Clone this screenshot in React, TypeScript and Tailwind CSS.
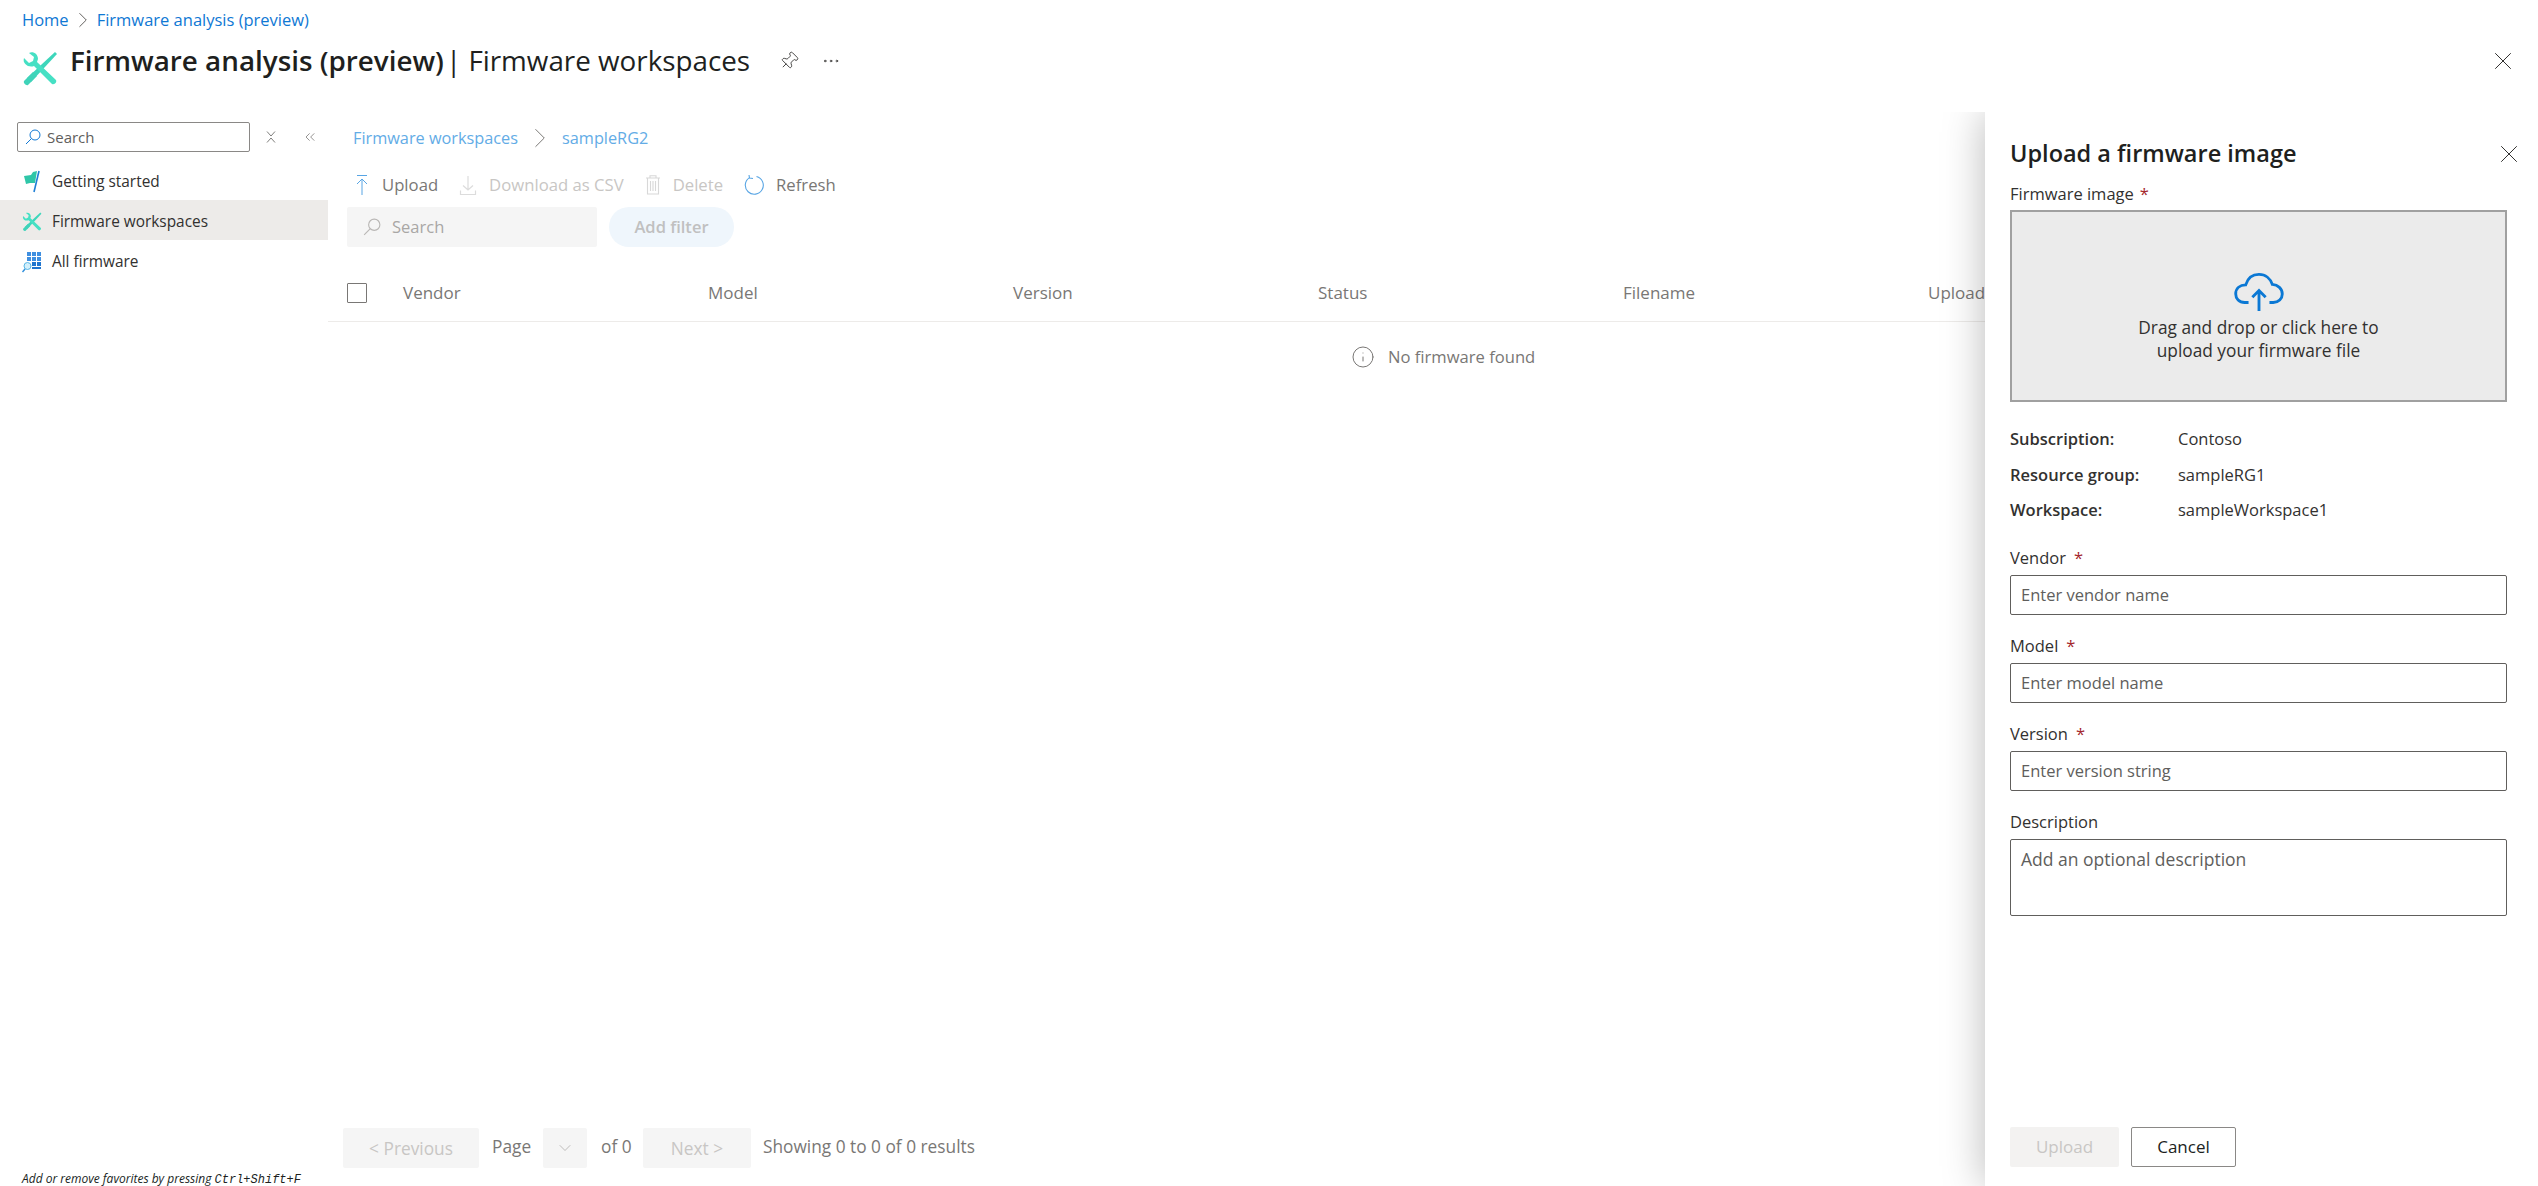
import type { ReactNode } from "react";
import { ChevronDown, ChevronRight, ChevronsLeft, Info, MoreHorizontal, Pin, X } from "lucide-react";

const FONT = "font-['Open_Sans','Noto_Sans',sans-serif]";

function WrenchIcon({ size }: { size: number }) {
  return (
    <svg width={size} height={size} viewBox="0 0 36 36" fill="none">
      <path d="M33 1 35 3 9 31 5 27Z" fill="#3dd6bb" />
      <path
        d="M2 7 7 12 11 10 12 6 7 2C11 0 16 3 16 8L15 11 34 29C35 31 33 34 30 33L12 15C7 17 0 13 2 7Z"
        fill="#46e0c4"
      />
      <path d="M2 30 11 21 15 25 6 34C4 35 1 32 2 30Z" fill="#3fd3b9" />
    </svg>
  );
}

function FlagIcon() {
  return (
    <svg width="20" height="24" viewBox="0 0 20 24" fill="none">
      <path d="M2 6 9 5 11 2 15 1 13 13 8 13 4 14Z" fill="#2fc6a8" />
      <path d="M17 1 12 22" stroke="#1f7fd6" strokeWidth="1.6" />
    </svg>
  );
}

function GridIcon() {
  return (
    <svg width="20" height="22" viewBox="0 0 20 22" fill="none">
      <path d="M5 1h4v4H5zM10 1h4v4h-4zM15 1h4v4h-4zM5 6h4v4H5zM10 6h4v4h-4zM15 6h4v4h-4z" fill="#3f8fe0" />
      <path d="M10 11h4v4h-4zM15 11h4v4h-4zM10 16h9v2H10z" fill="#1f75cf" />
      <circle cx="5.500" cy="15" r="3.500" fill="#d3f0fb" stroke="#58b6e6" />
      <path d="M3 18 0.500 21" stroke="#2f8fdc" strokeWidth="1.400" />
    </svg>
  );
}

function SearchGlyph({ size, className }: { size: number; className: string }) {
  return (
    <svg width={size} height={size} viewBox="0 0 16 16" fill="none" stroke="currentColor" className={className}>
      <circle cx="10" cy="6" r="5" />
      <path d="M6.500 9.500 1 15" />
    </svg>
  );
}

function CollapseGlyph() {
  return (
    <svg width="10" height="12" viewBox="0 0 10 12" fill="none" stroke="#605e5c" strokeWidth="0.8">
      <path d="M1 0.500 5 5 9 0.500M1 11.500 5 7 9 11.500" />
    </svg>
  );
}

function UploadArrow() {
  return (
    <svg width="16" height="20" viewBox="0 0 16 20" fill="none" className="text-[#58a5e4]">
      <path d="M3 0.500h10M8 20V4M3 9 8 4l5 5" stroke="currentColor" strokeWidth="1" />
    </svg>
  );
}

function DownloadArrow() {
  return (
    <svg width="18" height="20" viewBox="0 0 18 20" fill="none" className="text-[#dcdcdc]">
      <path d="M9 1v14M4 10.500 9 15l5-4.500M1.500 15.500v4h15v-4" stroke="currentColor" strokeWidth="1.200" />
    </svg>
  );
}

function TrashIcon() {
  return (
    <svg width="16" height="20" viewBox="0 0 16 20" fill="none" className="text-[#d8d8d8]">
      <path d="M1 3h14M5 3V0.800h6V3M2.500 3v16h11V3M5.500 6v10M8 6v10M10.500 6v10" stroke="currentColor" strokeWidth="1.100" />
    </svg>
  );
}

function RefreshGlyph() {
  return (
    <svg width="20" height="20" viewBox="0 0 20 20" fill="none" stroke="#58a5e4" strokeWidth="1.100">
      <path d="M12.500 1.500A9 9 0 1 1 5.500 2.600" />
      <path d="M5 0 5.500 3 9 3.500" />
    </svg>
  );
}

function CloudUpload() {
  return (
    <svg width="50" height="38" viewBox="0 0 52 40" fill="none" stroke="#0b78d4" strokeWidth="3">
      <path d="M15 31H11C5 31 1.500 27 1.500 22C1.500 16 6 12.500 12 12.500C14 6 19 1.500 26 1.500C33 1.500 38 6 40 12C46 12.500 50.500 16.500 50.500 22C50.500 27 46.500 31 41 31H37" />
      <path d="M26 40V19M19 25.500 26 18.500 33 25.500" />
    </svg>
  );
}

function ToolbarItem({ icon, label, muted }: { icon: ReactNode; label: string; muted?: boolean }) {
  return (
    <div className="flex items-center gap-[12px]">
      {icon}
      <span className={muted ? "text-[#c8c6c4]" : "text-[#797775]"}>{label}</span>
    </div>
  );
}

function Field({ label, placeholder }: { label: string; placeholder: string }) {
  return (
    <div className="flex flex-col">
      <div className="h-[24px] mb-[4px] flex items-center text-[#323130] font-medium">
        {label}
        <span className="ml-[8px] text-[#a4262c]">*</span>
      </div>
      <div className="h-[40px] flex items-center px-[10px] pt-[2px] border border-[#605e5c] rounded-[2px] text-[#605e5c]">
        {placeholder}
      </div>
    </div>
  );
}

function InfoRow({ label, value }: { label: string; value: string }) {
  return (
    <div className="flex items-center h-[35.500px]">
      <span className="w-[168px] font-semibold text-[#323130]">{label}</span>
      <span className="text-[#323130]">{value}</span>
    </div>
  );
}

export default function App() {
  const columns = ["Vendor", "Model", "Version", "Status", "Filename", "Upload"];

  return (
    <div className={`${FONT} relative flex flex-col w-full h-screen overflow-hidden bg-white text-[16.500px] text-[#323130]`}>
      {/* page header */}
      <div className="h-[112px] shrink-0 pl-[22px] pr-[20px] pt-[9px]">
        <div className="flex items-center h-[22px] text-[#0f78d4]">
          <span>Home</span>
          <ChevronRight size={26} strokeWidth={0.9} className="mx-[1px] text-[#605e5c]" />
          <span>Firmware analysis (preview)</span>
        </div>
        <div className="flex items-center mt-[8px] h-[44px]">
          <div className="mt-[15px] mr-[12px]">
            <WrenchIcon size={36} />
          </div>
          <span className="text-[27.800px] font-semibold text-[#201f1e]">Firmware analysis (preview)</span>
          <span className="text-[27.800px] text-[#201f1e] ml-[2px]">| Firmware workspaces</span>
          <Pin size={20} strokeWidth={1} className="ml-[29px] rotate-45 text-[#323130]" />
          <MoreHorizontal size={20} strokeWidth={1} className="ml-[22px] text-[#323130]" />
          <X size={30} strokeWidth={0.8} className="ml-auto text-[#323130]" />
        </div>
      </div>

      <div className="flex flex-1 min-h-0">
        {/* resource menu */}
        <aside className="w-[328px] shrink-0 flex flex-col">
          <div className="flex items-center h-[30px] mt-[10px] pl-[17px]">
            <div className="w-[233px] h-[30px] flex items-center px-[7px] gap-[6px] border border-[#8a8886] rounded-[2px] text-[#605e5c]">
              <SearchGlyph size={16} className="text-[#0f78d4]" />
              <span className="text-[15px]">Search</span>
            </div>
            <div className="ml-[16px]">
              <CollapseGlyph />
            </div>
            <ChevronsLeft size={16} strokeWidth={1} className="ml-[26px] text-[#605e5c]" />
          </div>
          <nav className="mt-[8px] flex flex-col text-[15.400px]">
            <div className="h-[40px] flex items-center pl-[22px] pt-[3px] gap-[10px]">
              <FlagIcon />
              <span>Getting started</span>
            </div>
            <div className="h-[40px] flex items-center pl-[22px] pt-[3px] gap-[10px] bg-[#edebe9]">
              <WrenchIcon size={20} />
              <span className="font-medium">Firmware workspaces</span>
            </div>
            <div className="h-[40px] flex items-center pl-[22px] pt-[3px] gap-[10px]">
              <GridIcon />
              <span>All firmware</span>
            </div>
          </nav>
          <div className="mt-auto pl-[22px] h-[14px] text-[12px] leading-[14px] italic text-[#201f1e] whitespace-nowrap">
            Add or remove favorites by pressing <span className="font-['Liberation_Mono',monospace]">Ctrl+Shift+F</span>
          </div>
        </aside>

        {/* content */}
        <main className="flex-1 flex flex-col min-w-0">
          <div className="flex items-center h-[26px] mt-[13px] pl-[25px] text-[16.300px] text-[#63ace6]">
            <span>Firmware workspaces</span>
            <ChevronRight size={34} strokeWidth={0.7} className="mx-[5px] text-[#797775]" />
            <span>sampleRG2</span>
          </div>
          <div className="flex items-center h-[26px] mt-[21px] pl-[26px] gap-[21px] text-[16.700px]">
            <ToolbarItem icon={<UploadArrow />} label="Upload" />
            <ToolbarItem icon={<DownloadArrow />} label="Download as CSV" muted />
            <ToolbarItem icon={<TrashIcon />} label="Delete" muted />
            <ToolbarItem icon={<RefreshGlyph />} label="Refresh" />
          </div>
          <div className="flex items-center mt-[9px] pl-[19px] gap-[12px]">
            <div className="w-[250px] h-[40px] flex items-center pl-[16px] gap-[11px] bg-[#f5f5f5] rounded-[2px] text-[#a9a7a5]">
              <SearchGlyph size={18} className="text-[#b9b7b5]" />
              <span>Search</span>
            </div>
            <div className="w-[125px] h-[40px] flex items-center justify-center rounded-[20px] bg-[#eff6fc] font-semibold text-[#c0c0c0]">
              Add filter
            </div>
          </div>
          <div className="flex items-center h-[57px] mt-[18px] border-b border-[#edebe9] text-[#797775] text-[17px] font-medium">
            <div className="ml-[19px] mr-[36px] w-[20px] h-[20px] border border-[#797775] rounded-[1px]" />
            <div className="grid grid-cols-[repeat(6,305px)]">
              {columns.map((name) => (
                <span key={name}>{name}</span>
              ))}
            </div>
          </div>
          <div className="flex items-center h-[70px] pl-[1023px] gap-[13px] text-[16.600px] text-[#797775]">
            <Info size={24} strokeWidth={1} />
            <span>No firmware found</span>
          </div>

          {/* pager */}
          <div className="mt-auto mb-[18px] pl-[15px] flex items-center text-[#797775] text-[17.300px]">
            <div className="w-[136px] h-[40px] flex items-center justify-center pt-[2px] bg-[#f5f5f5] rounded-[2px] text-[#c8c6c4]">
              &lt; Previous
            </div>
            <span className="ml-[13px] w-[38px] -mt-[3px]">Page</span>
            <div className="ml-[13px] w-[44px] h-[40px] flex items-center justify-center bg-[#f5f5f5] rounded-[2px]">
              <ChevronDown size={20} strokeWidth={0.8} className="text-[#a19f9d]" />
            </div>
            <span className="ml-[14px] w-[31px] -mt-[3px] whitespace-nowrap">of 0</span>
            <div className="ml-[11px] w-[108px] h-[40px] flex items-center justify-center pt-[2px] bg-[#f5f5f5] rounded-[2px] text-[#c8c6c4]">
              Next &gt;
            </div>
            <span className="ml-[12px] -mt-[2px]">Showing 0 to 0 of 0 results</span>
          </div>
        </main>
      </div>

      {/* upload side panel */}
      <div className="absolute top-[112px] right-0 bottom-0 w-[620px] overflow-hidden flex justify-end">
        <section className="w-[553px] h-full bg-white shadow-[0_0_40px_rgba(0,0,0,0.28)] pl-[25px] pr-[31px] flex flex-col">
          <div className="flex items-center justify-between h-[30px] mt-[27px]">
            <h2 className="text-[23.500px] font-semibold text-[#201f1e]">Upload a firmware image</h2>
            <X size={30} strokeWidth={0.8} className="text-[#323130] -mr-[17px]" />
          </div>
          <div className="mt-[13px] h-[24px] flex items-center font-medium text-[#323130]">
            Firmware image<span className="ml-[6px] text-[#a4262c]">*</span>
          </div>
          <div className="mt-[4px] h-[192px] shrink-0 border-2 border-[#a0a0a0] bg-[#ebebeb] flex flex-col items-center justify-center pt-[23px]">
            <CloudUpload />
            <p className="mt-[5px] text-center text-[17.300px] leading-[23px] font-medium text-[#323130]">
              Drag and drop or click here to
              <br />
              upload your firmware file
            </p>
          </div>
          <div className="mt-[20px] flex flex-col">
            <InfoRow label="Subscription:" value="Contoso" />
            <InfoRow label="Resource group:" value="sampleRG1" />
            <InfoRow label="Workspace:" value="sampleWorkspace1" />
          </div>
          <div className="mt-[18px] flex flex-col gap-[20px]">
            <Field label="Vendor" placeholder="Enter vendor name" />
            <Field label="Model" placeholder="Enter model name" />
            <Field label="Version" placeholder="Enter version string" />
            <div className="flex flex-col">
              <div className="h-[24px] mb-[4px] flex items-center text-[#323130] font-medium">Description</div>
              <div className="h-[77px] px-[10px] pt-[6px] border border-[#605e5c] rounded-[2px] text-[17.500px] text-[#605e5c]">
                Add an optional description
              </div>
            </div>
          </div>
          <div className="mt-auto mb-[19px] flex gap-[12px] text-[17px]">
            <div className="w-[109px] h-[40px] flex items-center justify-center rounded-[2px] bg-[#f3f2f1] font-medium text-[#c8c6c4]">
              Upload
            </div>
            <div className="w-[105px] h-[40px] flex items-center justify-center rounded-[2px] border border-[#8a8886] font-medium text-[#201f1e]">
              Cancel
            </div>
          </div>
        </section>
      </div>
    </div>
  );
}
